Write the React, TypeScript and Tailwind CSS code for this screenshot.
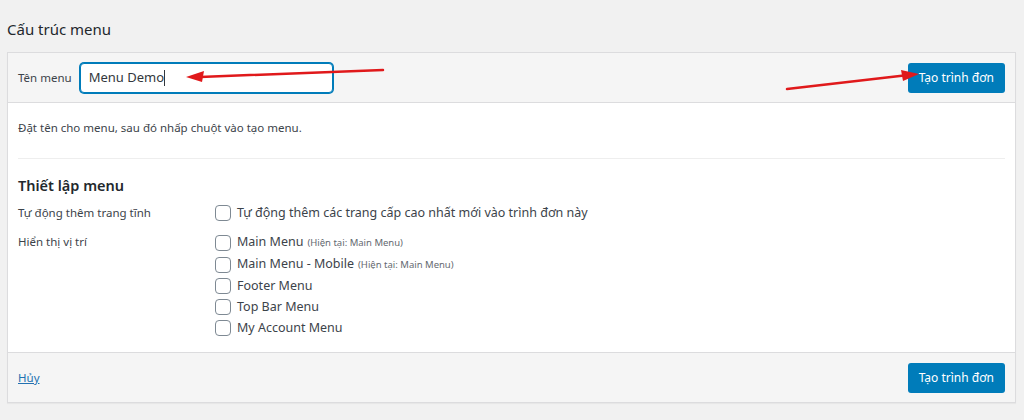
import React from 'react';

const locations = [
  { label: 'Main Menu', note: '(Hiện tại: Main Menu)' },
  { label: 'Main Menu - Mobile', note: '(Hiện tại: Main Menu)' },
  { label: 'Footer Menu' },
  { label: 'Top Bar Menu' },
  { label: 'My Account Menu' },
];

const Box = () => (
  <span className="inline-block w-4 h-4 shrink-0 rounded-[4px] border border-[#7e8993] bg-white" />
);

export default function App() {
  return (
    <div className="relative min-h-[420px] bg-[#f1f1f1] px-[7px] pr-[8px] text-[#3c434a] text-[11.5px]" style={{ fontFamily: '"Noto Sans", "Open Sans", sans-serif' }}>
      <h2 className="pt-[18px] pb-[12px] text-[15px] leading-[22px] font-normal text-[#23282d]">Cấu trúc menu</h2>

      <div className="border border-[#dcdcde] bg-white shadow-[0_1px_1px_rgba(0,0,0,0.04)]">
        <div className="flex items-center justify-between h-[50px] px-[10px] bg-[#f5f5f5] border-b border-[#dcdcde]">
          <div className="flex items-center gap-[8px]">
            <span>Tên menu</span>
            <div className="flex items-center w-[253px] h-[30px] px-[8px] rounded-[4px] border border-[#007cba] shadow-[0_0_0_1px_#007cba] bg-white text-[13px] text-[#32373c]">
              Menu Demo<span className="inline-block w-px h-[16px] bg-[#32373c]" />
            </div>
          </div>
          <button className="h-[30px] px-[11px] rounded-[3px] bg-[#007cba] text-white text-[12px]">Tạo trình đơn</button>
        </div>

        <div className="px-[10px] pt-[15px] pb-[14px]">
          <p className="leading-[20px]">Đặt tên cho menu, sau đó nhấp chuột vào tạo menu.</p>
          <div className="mt-[20px] border-t border-[#eeeeee]" />
          <h3 className="mt-[15px] text-[14.5px] leading-[22px] font-semibold text-[#23282d]">Thiết lập menu</h3>
          <div className="mt-[7px] flex">
            <div className="w-[197px] leading-[20px]">Tự động thêm trang tĩnh</div>
            <label className="flex items-center gap-[6px] leading-[20px] text-[12.5px]"><Box />Tự động thêm các trang cấp cao nhất mới vào trình đơn này</label>
          </div>
          <div className="mt-[9px] flex">
            <div className="w-[197px] leading-[20px]">Hiển thị vị trí</div>
            <div className="flex flex-col gap-[1px] text-[12.5px]">
              {locations.map((l) => (
                <label key={l.label} className="flex items-center gap-[6px] leading-[20px]">
                  <Box />
                  <span>{l.label}{l.note && <span className="ml-[4px] text-[9.5px] text-[#646970]">{l.note}</span>}</span>
                </label>
              ))}
            </div>
          </div>
        </div>

        <div className="flex items-center justify-between h-[50px] px-[10px] bg-[#f5f5f5] border-t border-[#dcdcde]">
          <a className="text-[#2271b1] underline">Hủy</a>
          <button className="h-[30px] px-[11px] rounded-[3px] bg-[#007cba] text-white text-[12px]">Tạo trình đơn</button>
        </div>
      </div>

      <svg className="absolute left-0 top-0 pointer-events-none" width="1024" height="420">
        <line x1="383" y1="70" x2="200" y2="77" stroke="#e0191b" strokeWidth="2.5" strokeLinecap="round" />
        <polygon points="186,77 204,71 202,82" fill="#e0191b" />
        <line x1="787" y1="89" x2="904" y2="75.5" stroke="#e0191b" strokeWidth="2.5" strokeLinecap="round" />
        <polygon points="919,74 901,70 903,81" fill="#e0191b" />
      </svg>
    </div>
  );
}
